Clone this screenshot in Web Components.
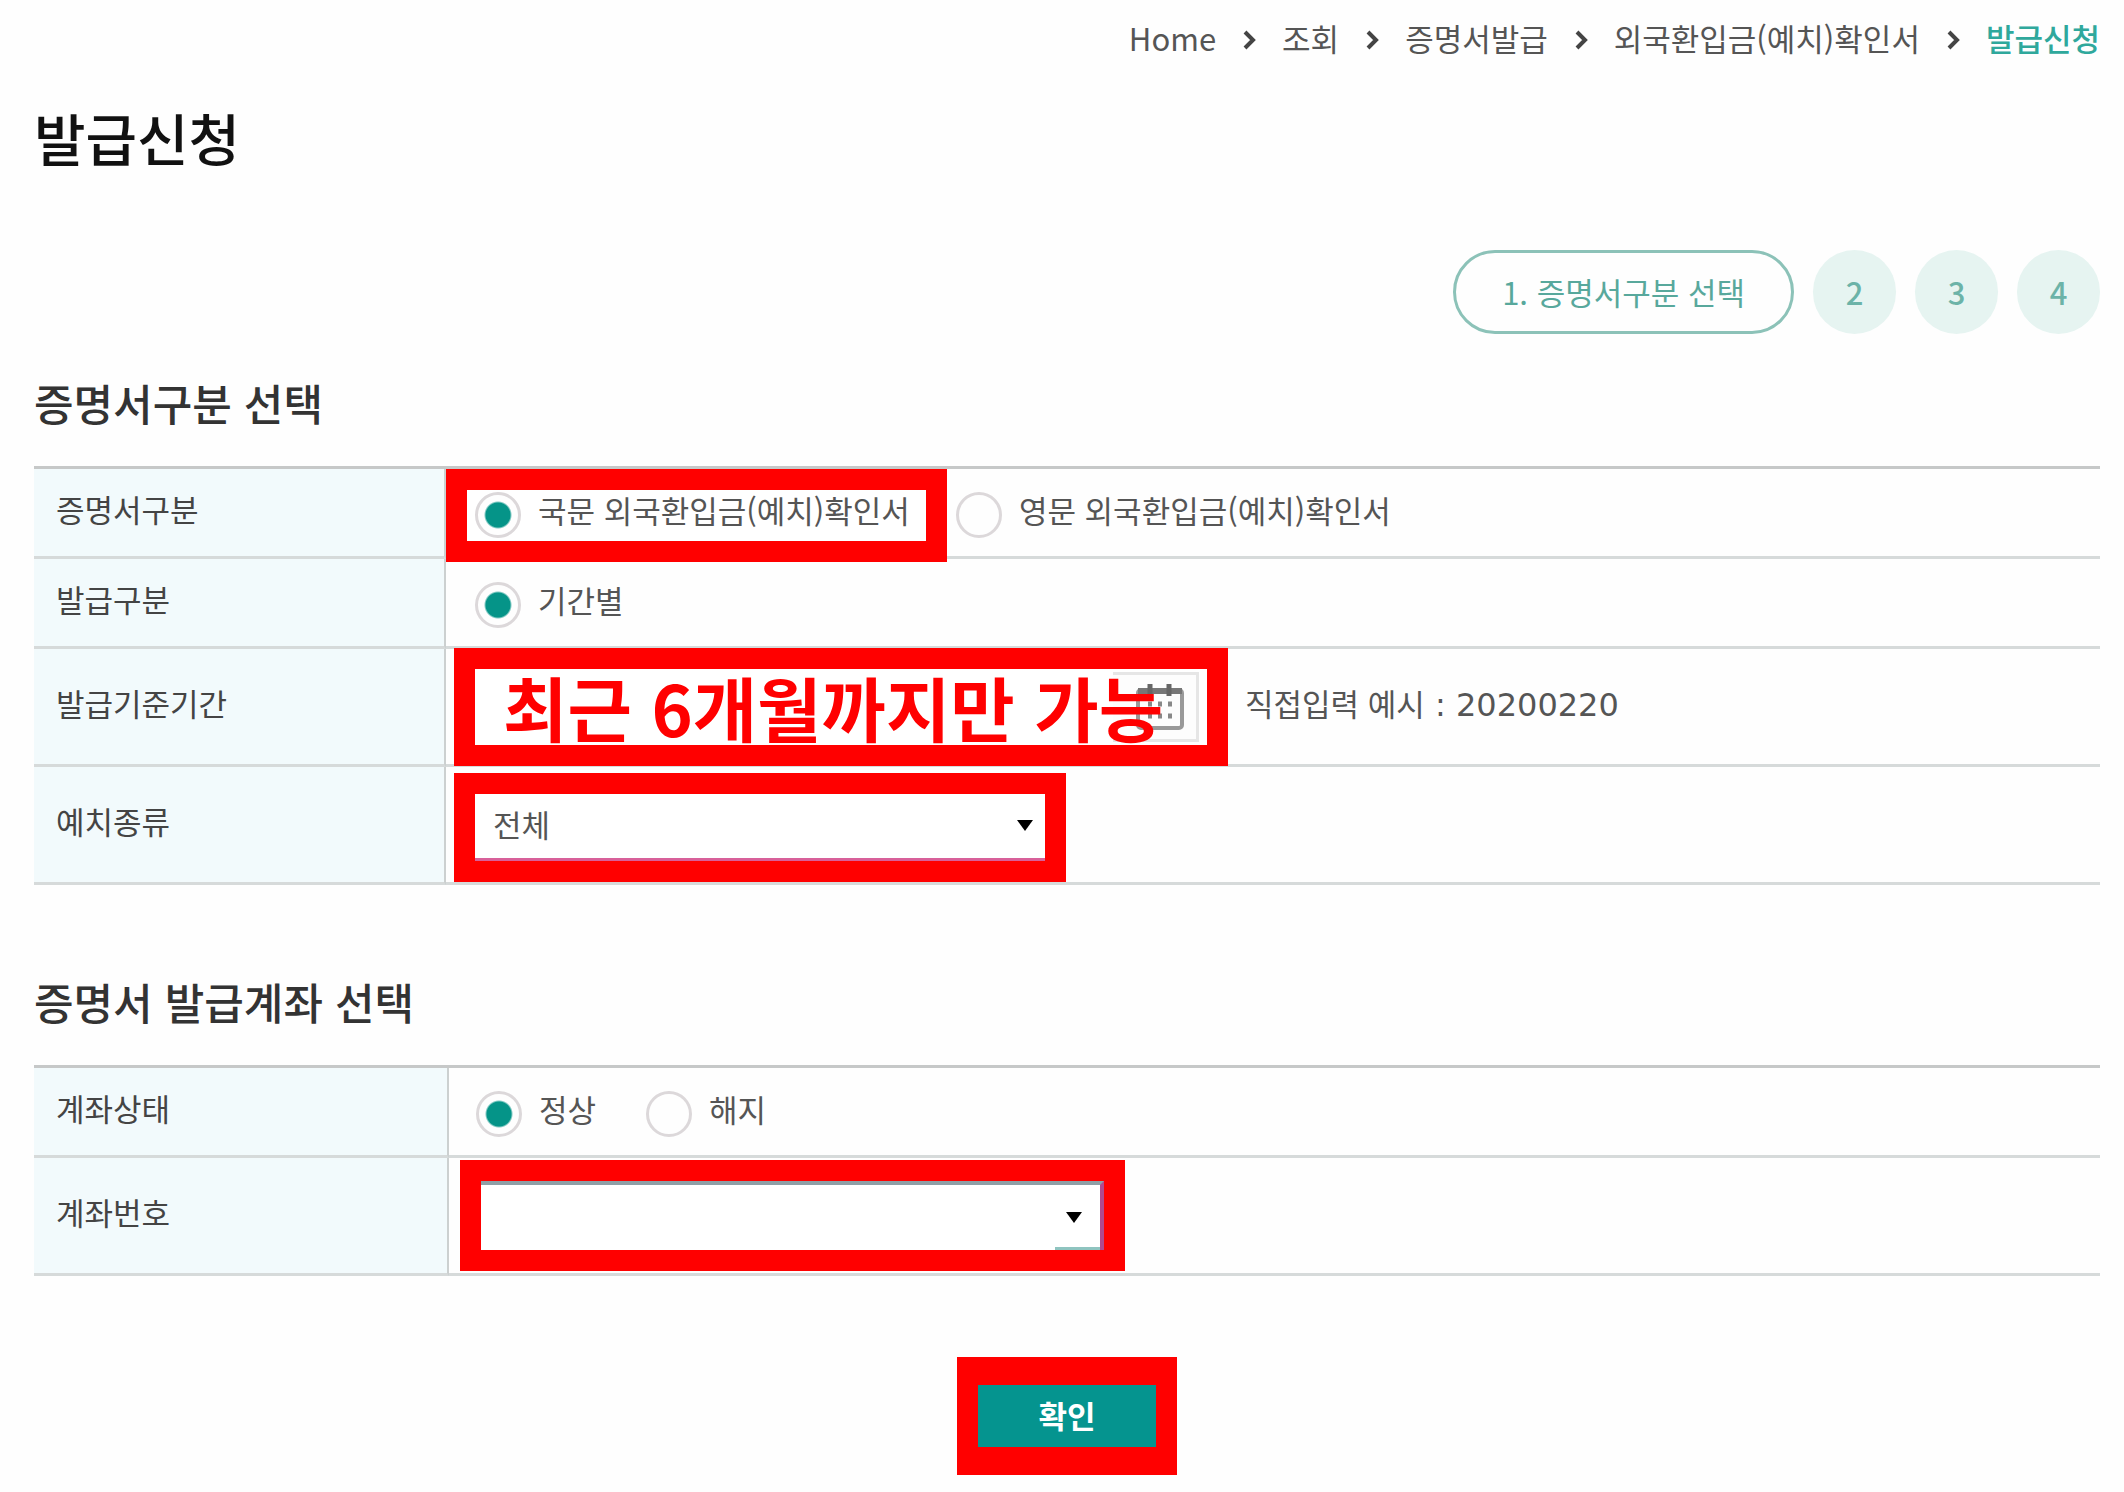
<!DOCTYPE html>
<html lang="ko">
<head>
<meta charset="utf-8">
<title>발급신청</title>
<style>
  body {
    margin: 0;
    background: #fefefe;
    color: #555;
    font-family: "Noto Sans CJK KR", "Noto Sans", sans-serif;
    font-size: 31px;
    line-height: 40px;
  }
</style>
</head>
<body>
<issue-page></issue-page>

<script>
class BaseElement extends HTMLElement {
  connectedCallback() {
    if (this.shadowRoot) return;
    this.attachShadow({ mode: 'open' }).innerHTML =
      '<style>*{box-sizing:border-box}' + this.styles() + '</style>' + this.markup();
  }
  styles() { return ''; }
  markup() { return '<slot></slot>'; }
}

/* Breadcrumb trail, aligned right */
customElements.define('bread-crumb', class extends BaseElement {
  styles() {
    return `
      :host { display: block; }
      ol { display: flex; justify-content: flex-end; gap: 26px; margin: 0; padding: 0; list-style: none; }
      li { display: flex; align-items: center; gap: 26px; }
      a { color: #555; text-decoration: none; white-space: nowrap; }
      a[aria-current] { color: #2fa89c; font-weight: 500; }
      svg { display: block; width: 14px; height: 20px; fill: none; stroke: #444; stroke-width: 4; margin-top: 3px; }
    `;
  }
  markup() {
    const items = this.getAttribute('items').split('|');
    return '<nav aria-label="경로"><ol>' + items.map((t, i) => {
      const last = i === items.length - 1;
      return `<li><a href="#"${last ? ' aria-current="page"' : ''}>${t}</a>` +
        (last ? '' : '<svg viewBox="0 0 14 20" aria-hidden="true"><path d="M3 2l8 8-8 8"/></svg>') + '</li>';
    }).join('') + '</ol></nav>';
  }
});

/* Progress steps: the active one is a named pill */
customElements.define('step-list', class extends BaseElement {
  styles() {
    return `
      :host { display: block; }
      ol { display: flex; justify-content: flex-end; gap: 19px; margin: 0; padding: 0; list-style: none; }
      li { display: flex; align-items: center; justify-content: center; width: 83px; height: 84px;
           border-radius: 42px; background: #e6f4f1; color: #6cb3a8; font-weight: 500; }
      li.on { width: auto; padding: 0 46px; border: 3px solid #8cc2b8; background: #fefefe; font-weight: 400; color: #58a89c; }
    `;
  }
  markup() {
    return '<ol><li class="on" aria-current="step"><slot></slot></li><li>2</li><li>3</li><li>4</li></ol>';
  }
});

/* Red frame that marks the field inside it */
customElements.define('mark-frame', class extends BaseElement {
  styles() {
    return `
      :host { display: flex; align-items: center; position: relative; box-sizing: border-box; outline: 21px solid #f00; background: #fff; }
      .note { position: absolute; left: 28px; top: 50%; transform: translateY(-50%); color: #f00;
              font-size: 70px; line-height: 76px; font-weight: 700; white-space: nowrap; }
    `;
  }
  markup() {
    const note = this.getAttribute('note');
    return '<slot></slot>' + (note ? `<span class="note">${note}</span>` : '');
  }
});

customElements.define('calendar-button', class extends BaseElement {
  styles() {
    return `
      :host { display: block; }
      button { display: flex; align-items: center; justify-content: flex-end; width: 86px; height: 70px; margin: 0;
               padding: 0 12px 0 0; background: #fdfdfd; border: 3px solid #e6e6e6; border-left: 0; }
      svg { display: block; width: 48px; height: 48px; }
    `;
  }
  markup() {
    return `<button type="button" aria-label="달력">
      <svg viewBox="0 0 48 48" aria-hidden="true">
        <rect x="2" y="7" width="44" height="38" rx="3" fill="none" stroke="#999" stroke-width="4"/>
        <path d="M2 8h44" stroke="#777" stroke-width="6"/>
        <path d="M14 1v12M33 1v12" stroke="#666" stroke-width="5"/>
        <path d="M12 21h4M22 21h4M32 21h4M12 33h4M22 33h4M32 33h4" stroke="#888" stroke-width="5"/>
      </svg></button>`;
  }
});

/* Shared look of both form tables */
class FormSection extends BaseElement {
  styles() {
    return `
      :host { display: block; }
      h2 { margin: 0 0 34px; color: #333; font-size: 43px; line-height: 60px; font-weight: 500; }
      table { width: 100%; border-spacing: 0; border-top: 3px solid #c6c8c8; table-layout: fixed; }
      col.head { width: var(--head, 412px); }
      th, td { height: 90px; padding: 0; border-bottom: 3px solid #d6dada; text-align: left; vertical-align: middle; }
      .tall th, .tall td { height: 118px; }
      th { padding: 0 0 8px 22px; border-right: 2px solid #ccd0d0; background: #f2fafc; color: #444; font-weight: 400; }
      td { padding-left: 29px; }
      td.low { padding-top: 5px; }
      .line { display: flex; align-items: center; gap: 50px; }
      .radio { display: flex; align-items: center; gap: 17px; white-space: nowrap; }
      .radio span { padding-bottom: 10px; }
      input { appearance: none; flex: none; width: 46px; height: 46px; margin: 0; border: 3px solid #dcd8da;
              border-radius: 50%; background: #fefefe; }
      input:checked { background: radial-gradient(circle, #059488 12px, #fefefe 14px); }
      .pick { display: flex; align-items: center; position: relative; width: 100%; height: 100%; }
      select { appearance: none; width: 100%; height: 100%; margin: 0; padding: 0 60px 4px 18px; border: 0;
               border-radius: 0; background: none; color: #555; font: inherit; }
      .pick svg { position: absolute; right: var(--arrow, 12px); width: 16px; height: 11px; fill: #000; pointer-events: none; }
    `;
  }
  arrow() { return '<svg viewBox="0 0 16 11" aria-hidden="true"><path d="M0 0h16L8 11z"/></svg>'; }
}

customElements.define('type-section', class extends FormSection {
  styles() {
    return super.styles() + `
      .first { height: 51px; margin: 0 -16px 0 -8px; padding: 0 16px 0 8px; }
      .line.cert-line { gap: 46px; }
      .period { width: 732px; height: 76px; padding-right: 8px; justify-content: flex-end; }
      .kind { width: 570px; height: 67px; border-bottom: 3px solid #d8609a; }
      .line.period-line { gap: 38px; }
      .digits { font-family: "DejaVu Sans", "Noto Sans CJK KR", sans-serif; font-size: 32px; }
      .hint { padding-bottom: 5px; }
    `;
  }
  markup() {
    return `
      <h2>증명서구분 선택</h2>
      <table>
        <colgroup><col class="head"><col></colgroup>
        <tr><th scope="row" id="cert">증명서구분</th><td class="low">
          <div class="line cert-line" role="radiogroup" aria-labelledby="cert">
            <mark-frame class="first"><label class="radio"><input type="radio" name="cert" checked><span>국문 외국환입금(예치)확인서</span></label></mark-frame>
            <label class="radio"><input type="radio" name="cert"><span>영문 외국환입금(예치)확인서</span></label>
          </div></td></tr>
        <tr><th scope="row" id="unit">발급구분</th><td class="low">
          <div class="line" role="radiogroup" aria-labelledby="unit">
            <label class="radio"><input type="radio" name="unit" checked><span>기간별</span></label>
          </div></td></tr>
        <tr class="tall"><th scope="row">발급기준기간</th><td>
          <div class="line period-line">
            <mark-frame class="period" note="최근 6개월까지만 가능"><calendar-button></calendar-button></mark-frame>
            <span class="hint">직접입력 예시<span class="digits"> : 20200220</span></span>
          </div></td></tr>
        <tr class="tall"><th scope="row"><label for="kind">예치종류</label></th><td class="low">
          <mark-frame class="kind"><div class="pick"><select id="kind"><option>전체</option></select>${this.arrow()}</div></mark-frame>
        </td></tr>
      </table>`;
  }
});

customElements.define('account-section', class extends FormSection {
  styles() {
    return super.styles() + `
      :host { --head: 415px; --arrow: 18px; }
      td { padding-left: 27px; }
      .account { width: 623px; height: 69px; margin-left: 5px; border-top: 4px solid #8f9fa6; border-right: 4px solid #b04a90; }
      .account .pick { background: linear-gradient(#8fc4c0, #8fc4c0) right bottom / 45px 3px no-repeat; }
    `;
  }
  markup() {
    return `
      <h2>증명서 발급계좌 선택</h2>
      <table>
        <colgroup><col class="head"><col></colgroup>
        <tr><th scope="row" id="state">계좌상태</th><td class="low">
          <div class="line" role="radiogroup" aria-labelledby="state">
            <label class="radio"><input type="radio" name="state" checked><span>정상</span></label>
            <label class="radio"><input type="radio" name="state"><span>해지</span></label>
          </div></td></tr>
        <tr class="tall"><th scope="row"><label for="account">계좌번호</label></th><td>
          <mark-frame class="account"><div class="pick"><select id="account"><option></option></select>${this.arrow()}</div></mark-frame>
        </td></tr>
      </table>`;
  }
});

customElements.define('confirm-button', class extends BaseElement {
  styles() {
    return `
      :host { display: flex; justify-content: center; }
      .frame { border: solid #f00; border-width: 28px 21px; }
      button { display: block; width: 178px; height: 62px; margin: 0; padding: 0 0 2px; border: 0; background: #05948f;
               color: #fff; font: inherit; font-weight: 700; }
    `;
  }
  markup() { return '<div class="frame"><button type="submit"><slot></slot></button></div>'; }
});

customElements.define('issue-page', class extends BaseElement {
  styles() {
    return `
      :host { display: block; padding: 18px 24px 16px 34px; }
      h1 { margin: 39px 0 73px; color: #111; font-size: 56px; line-height: 80px; font-weight: 500; }
      type-section { margin-top: 38px; }
      account-section { margin-top: 86px; }
      confirm-button { margin-top: 81px; }
    `;
  }
  markup() {
    return `
      <bread-crumb items="Home|조회|증명서발급|외국환입금(예치)확인서|발급신청"></bread-crumb>
      <main>
        <h1>발급신청</h1>
        <step-list>1. 증명서구분 선택</step-list>
        <form>
          <type-section></type-section>
          <account-section></account-section>
          <confirm-button>확인</confirm-button>
        </form>
      </main>`;
  }
});
</script>
</body>
</html>
